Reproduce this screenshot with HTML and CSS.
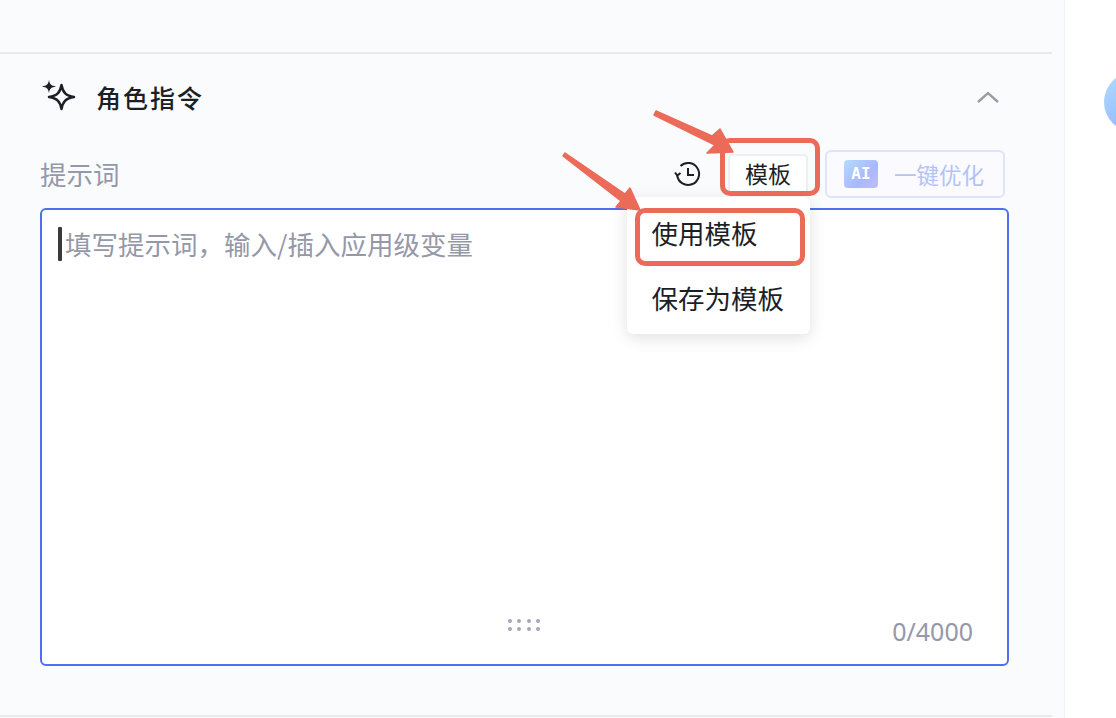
FILE: index.html
```html
<!DOCTYPE html>
<html>
<head>
  <title>角色指令</title>
  <meta charset="UTF-8">
  <link rel="stylesheet" href="styles.css">
</head>
<body>
  <div class="page">
    <div class="panel">
      <div class="top-space"></div>
      <div class="section">
        <div class="section-head">
          <div class="section-title">
            <svg class="spark" width="36" height="36" viewBox="0 0 36 36" fill="none">
              <path d="M20.500 6C21.800 13.500 25 16.800 33 18C25 19.200 21.800 22.500 20.500 30C19.200 22.500 16 19.200 8 18C16 16.800 19.200 13.500 20.500 6Z" stroke="#1c1f26" stroke-width="2.500" stroke-linejoin="round"/>
              <path d="M8 1C8.800 5.300 10 6.500 15 7.500C10 8.500 8.800 9.700 8 14C7.200 9.700 6 8.500 1 7.500C6 6.500 7.200 5.300 8 1Z" fill="#1c1f26"/>
            </svg>
            <span>角色指令</span>
          </div>
          <svg class="chevron" width="26" height="16" viewBox="0 0 26 16" fill="none">
            <path d="M3 13L13 4L23 13" stroke="#9a9ca8" stroke-width="2.400"/>
          </svg>
        </div>
        <div class="prompt-head">
          <span class="prompt-label">提示词</span>
          <div class="prompt-tools">
            <svg class="history" width="28" height="28" viewBox="0 0 28 28" fill="none">
              <path d="M6.500 6A11 11 0 1 1 3.200 15.500" stroke="#1c1f26" stroke-width="2"/>
              <path d="M1 12.500L3.300 15.500L6.500 13" stroke="#1c1f26" stroke-width="2"/>
              <path d="M14 8V15H20" stroke="#1c1f26" stroke-width="2"/>
            </svg>
            <button class="btn-template">模板</button>
            <button class="btn-ai">
              <span class="ai-badge">AI</span>
              <span class="ai-text">一键优化</span>
            </button>
          </div>
        </div>
        <div class="editor">
          <div class="placeholder"><span class="caret"></span>填写提示词，输入/插入应用级变量</div>
          <div class="editor-foot">
            <div class="grip">
              <i></i><i></i><i></i><i></i><i></i><i></i><i></i><i></i>
            </div>
            <span class="count">0/4000</span>
          </div>
        </div>
      </div>
      <div class="section-end"></div>
    </div>
    <div class="side"></div>
  </div>

  <div class="menu">
    <div class="menu-item">使用模板</div>
    <div class="menu-item">保存为模板</div>
  </div>

  <!-- 标注 -->
  <div class="mark mark-btn"></div>
  <div class="mark mark-item"></div>
  <svg class="arrows" width="1116" height="718" viewBox="0 0 1116 718">
    <path d="M656 111L712 136L720 129L733 152L707 153L715 145L654 115Z" fill="#ec6a58" stroke="#ec6a58" stroke-width="1.500" stroke-linejoin="round"/>
    <path d="M565 153L625 194L630 188L640 210L616 207L621 201L563 156Z" fill="#ec6a58" stroke="#ec6a58" stroke-width="1.500" stroke-linejoin="round"/>
  </svg>
</body>
</html>
```

FILE: styles.css
```css
* {
  box-sizing: border-box;
}
html, body {
  margin: 0;
  height: 100%;
  overflow: hidden;
}
body {
  position: relative;
  width: 1116px;
  height: 718px;
  font-family: "Noto Sans CJK SC", "Noto Sans", sans-serif;
  background-color: #fff;
  color: #1c1f26;
}
.page {
  display: flex;
  height: 718px;
}
.panel {
  width: 1065px;
  padding-right: 12px;
  background-color: #fafbfd;
  border-right: 1px solid #f1f2f5;
}
.top-space {
  height: 52px;
}
.section {
  height: 663px;
  padding: 0 44px 0 40px;
  border-top: 2px solid #e8e9ec;
}
.section-end {
  height: 2px;
  background-color: #e8e9ec;
}
.section-head {
  display: flex;
  align-items: center;
  justify-content: space-between;
  height: 86px;
  padding-right: 7px;
}
.section-title {
  display: flex;
  align-items: center;
  gap: 19px;
  font-size: 25px;
  font-weight: 500;
  letter-spacing: 2px;
}
.spark {
  margin-left: 1px;
}
.prompt-head {
  display: flex;
  align-items: center;
  justify-content: space-between;
  height: 67px;
  margin-bottom: 1px;
  padding-right: 3px;
}
.prompt-label {
  font-size: 26.500px;
  color: #9598a8;
}
.prompt-tools {
  display: flex;
  align-items: center;
}
.history {
  margin-right: 26px;
}
.btn-template {
  width: 80px;
  height: 40px;
  margin-right: 17px;
  padding: 0 0 2px;
  border: 2px solid #eeeff3;
  border-radius: 4px;
  background-color: #fff;
  font-family: inherit;
  font-size: 23px;
  color: #1c1f26;
}
.btn-ai {
  display: flex;
  align-items: center;
  gap: 16px;
  width: 180px;
  height: 48px;
  padding: 0 0 0 17px;
  border: 2px solid #dde4fb;
  border-radius: 6px;
  background-color: #fafaff;
  font-family: inherit;
  font-size: 22.500px;
  color: #b4c3f4;
}
.ai-text {
  white-space: nowrap;
}
.ai-badge {
  width: 34px;
  height: 28px;
  border-radius: 4px;
  background: linear-gradient(135deg, #b3dcff, #a9b8fd 60%, #c0bcfb);
  font-family: "DejaVu Sans Mono", monospace;
  font-size: 16px;
  font-weight: 700;
  line-height: 28px;
  text-align: center;
  color: #fff;
}
.editor {
  display: flex;
  flex-direction: column;
  justify-content: space-between;
  width: 969px;
  height: 458px;
  padding: 15px 34px 16px 16px;
  border: 2px solid #4f6ef0;
  border-radius: 6px;
  background-color: #fff;
}
.placeholder {
  display: flex;
  align-items: center;
  font-size: 26.500px;
  line-height: 38px;
  color: #9598a8;
}
.caret {
  width: 4px;
  height: 34px;
  margin-right: 3px;
  border-radius: 1px;
  background-color: #3a3a3c;
}
.editor-foot {
  display: flex;
  align-items: center;
  justify-content: flex-end;
  position: relative;
}
.grip {
  position: absolute;
  left: 450px;
  top: 5px;
  display: grid;
  grid-template-columns: repeat(4, 4px);
  column-gap: 5.300px;
  row-gap: 4px;
}
.grip i {
  width: 4px;
  height: 4px;
  border-radius: 50%;
  background-color: #a5a7b9;
}
.count {
  font-family: "Noto Sans", sans-serif;
  font-size: 25px;
  color: #9598a8;
}
.side {
  flex: 1;
}
.menu {
  position: absolute;
  left: 627px;
  top: 197px;
  width: 183px;
  height: 137px;
  padding: 3px 0;
  border-radius: 6px;
  background-color: #fff;
  box-shadow: 0 4px 16px rgba(0, 0, 0, 0.12);
}
.menu-item {
  height: 65px;
  padding-left: 24.500px;
  font-size: 26.500px;
  line-height: 65px;
  color: #1c1f26;
}
.mark {
  position: absolute;
  border: 5px solid #ec6a58;
  border-radius: 10px;
}
.mark-btn {
  left: 720px;
  top: 138px;
  width: 100px;
  height: 58px;
}
.mark-item {
  left: 635px;
  top: 208px;
  width: 170px;
  height: 58px;
}
.arrows {
  position: absolute;
  left: 0;
  top: 0;
}
/* 右侧头像一角 */
.side::after {
  content: "";
  position: absolute;
  left: 1104px;
  top: 72px;
  width: 60px;
  height: 60px;
  border-radius: 50%;
  background: linear-gradient(135deg, #b3dcff, #7fa7fb);
}
```
